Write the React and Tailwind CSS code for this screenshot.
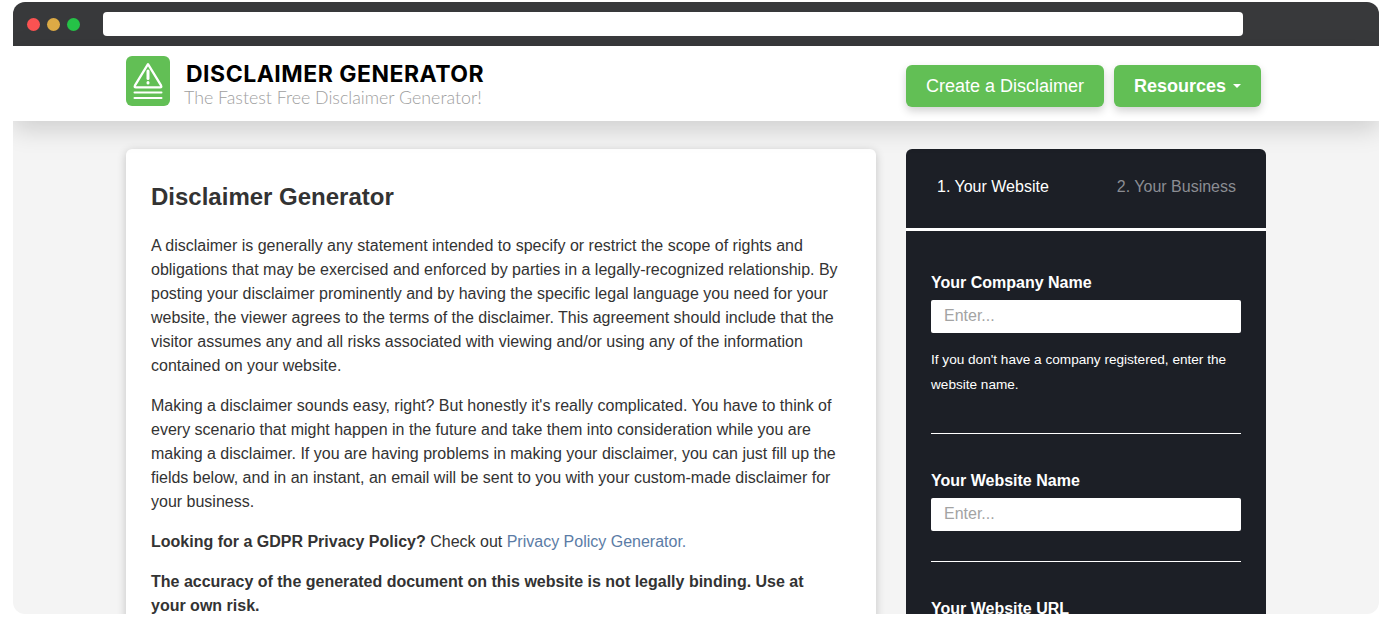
import React from 'react';

function Logo() {
  return (
    <div className="w-[44px] h-[50px] rounded-[6px] bg-[#62bf55] flex justify-center pt-[6px] shrink-0">
      <svg width="30" height="38" viewBox="0 0 30 38" fill="none" stroke="#fff" strokeLinecap="round" strokeLinejoin="round">
        <path d="M15 2.2 L28 23.4 Q29 25.4 27 25.4 H3 Q1 25.4 2 23.4 Z" strokeWidth="2.3" />
        <path d="M15 9 V16.5" strokeWidth="3" />
        <path d="M15 20.4 V21" strokeWidth="3" />
        <path d="M1.5 30.5 H28.5" strokeWidth="2" />
        <path d="M1.5 36 H28.5" strokeWidth="2" />
      </svg>
    </div>
  );
}

function Field({ label, children }) {
  return (
    <div>
      <label className="block text-[16px] leading-[18px] font-bold text-white mb-[8px]">{label}</label>
      <input
        placeholder="Enter..."
        className="w-full h-[33px] px-[13px] pb-[2px] bg-white rounded-[2px] text-[16px] text-[#333] placeholder:text-[#a3a3a3] outline-none"
      />
      {children}
    </div>
  );
}

export default function App() {
  return (
    <div className="bg-white h-[621px] pt-[2px] px-[13px] font-['Liberation_Sans',Arial,sans-serif]">
      <div className="w-[1366px] h-[612px] rounded-[12px] overflow-hidden bg-[#f4f4f4] flex flex-col">
        {/* browser chrome */}
        <div className="h-[44px] bg-[#38393b] flex items-center pl-[14px] shrink-0">
          <div className="flex gap-[7px]">
            <span className="w-[13px] h-[13px] rounded-full bg-[#fb5252]" />
            <span className="w-[13px] h-[13px] rounded-full bg-[#dcaa45]" />
            <span className="w-[13px] h-[13px] rounded-full bg-[#25c247]" />
          </div>
          <div className="ml-[23px] w-[1140px] h-[24px] bg-white rounded-[4px]" />
        </div>

        {/* site header */}
        <div className="relative z-10 h-[75px] bg-white shrink-0 shadow-[0_8px_24px_rgba(0,0,0,0.16)]">
          <div className="w-[1140px] ml-[113px] h-full flex items-start justify-between">
            <div className="flex items-start gap-[14px] pt-[10px]">
              <Logo />
              <div className="mt-[5px]">
                <div className="ml-[2px] font-['Inter',sans-serif] font-bold text-[23px] leading-[26px] text-black tracking-[0.5px] whitespace-nowrap">DISCLAIMER GENERATOR</div>
                <div className="font-['Lato',sans-serif] font-light text-[17.8px] leading-[20px] text-[#9e9e9e] whitespace-nowrap">The Fastest Free Disclaimer Generator!</div>
              </div>
            </div>
            <div className="flex gap-[10px] mr-[5px] pt-[19px]">
              <button className="w-[198px] h-[42px] rounded-[6px] bg-[#62bf55] text-white text-[18px] shadow-[0_4px_8px_rgba(0,0,0,0.18)]">Create a Disclaimer</button>
              <button className="w-[147px] h-[42px] rounded-[6px] bg-[#62bf55] text-white text-[18px] font-bold shadow-[0_4px_8px_rgba(0,0,0,0.18)] flex items-center justify-center gap-[7px]">
                Resources
                <span className="w-0 h-0 border-x-[4px] border-x-transparent border-t-[4px] border-t-white" />
              </button>
            </div>
          </div>
        </div>

        {/* content */}
        <div className="w-[1140px] ml-[113px] mt-[28px] flex gap-[30px] items-start">
          <div className="w-[750px] shrink-0 bg-white rounded-t-[6px] px-[25px] pt-[33px] pb-[30px] text-[16px] leading-[24px] text-[#333] shadow-[0_2px_10px_rgba(0,0,0,0.2)]">
            <h1 className="text-[24px] leading-[30px] font-bold mb-[22px]">Disclaimer Generator</h1>
            <p className="mb-[16px]">
              A disclaimer is generally any statement intended to specify or restrict the scope of rights and obligations that may be exercised and enforced by parties in a legally-recognized relationship. By posting your disclaimer prominently and by having the specific legal language you need for your website, the viewer agrees to the terms of the disclaimer. This agreement should include that the visitor assumes any and all risks associated with viewing and/or using any of the information contained on your website.
            </p>
            <p className="mb-[16px]">
              Making a disclaimer sounds easy, right? But honestly it's really complicated. You have to think of every scenario that might happen in the future and take them into consideration while you are making a disclaimer. If you are having problems in making your disclaimer, you can just fill up the fields below, and in an instant, an email will be sent to you with your custom-made disclaimer for your business.
            </p>
            <p className="mb-[16px]">
              <b>Looking for a GDPR Privacy Policy?</b> Check out <a className="text-[#5b7ca6]">Privacy Policy Generator.</a>
            </p>
            <p className="font-bold pr-[40px]">
              The accuracy of the generated document on this website is not legally binding. Use at your own risk.
            </p>
          </div>

          <div className="w-[360px] shrink-0 bg-[#1c1f26] rounded-t-[6px] h-[600px]">
            <div className="h-[79px] flex items-center justify-between pl-[31px] pr-[30px] pb-[4px] text-[16px]">
              <span className="text-white">1. Your Website</span>
              <span className="text-[#8b8d93]">2. Your Business</span>
            </div>
            <div className="h-[3px] bg-white" />
            <div className="px-[25px] pt-[43px]">
              <Field label="Your Company Name">
                <p className="mt-[14px] text-[13.6px] leading-[25px] text-white">If you don't have a company registered, enter the website name.</p>
              </Field>
              <hr className="mt-[36px] mb-[38px] border-white" />
              <Field label="Your Website Name" />
              <hr className="mt-[30px] mb-[38px] border-white" />
              <Field label="Your Website URL" />
            </div>
          </div>
        </div>
      </div>
    </div>
  );
}
